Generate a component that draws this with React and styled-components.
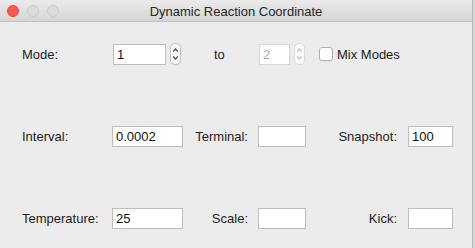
import styled, { createGlobalStyle } from "styled-components";

const GlobalStyle = createGlobalStyle`
  html, body {
    margin: 0;
    padding: 0;
    background: #d6d6d6;
  }
  body {
    font-family: "Liberation Sans", Arial, sans-serif;
    font-size: 13px;
    color: #1c1c1c;
  }
`;

const Window = styled.div`
  width: 473px;
  height: 248px;
  background: #ececec;
  border-right: 1px solid #b8b8b8;
  box-sizing: border-box;
  display: flex;
  flex-direction: column;
`;

const TitleBar = styled.div`
  height: 22px;
  box-sizing: border-box;
  position: relative;
  display: flex;
  align-items: center;
  justify-content: center;
  background: linear-gradient(180deg, #ebebeb 0%, #d5d5d5 100%);
  border-bottom: 1px solid #c2c2c2;
`;

const Lights = styled.div`
  position: absolute;
  left: 7px;
  top: 5px;
  display: flex;
  gap: 8px;
`;

const Light = styled.span`
  width: 12px;
  height: 12px;
  box-sizing: border-box;
  border-radius: 50%;
  background: ${(p) => (p.$red ? "#fc5753" : "#dcdcdc")};
  border: 1px solid ${(p) => (p.$red ? "#df4744" : "#cacaca")};
`;

const Title = styled.div`
  font-size: 13px;
  color: #262626;
  padding-top: 1px;
`;

const Form = styled.div`
  display: grid;
  grid-template-columns: 90px 71px 75px 48px 102px 45px;
  grid-template-rows: 22px 21px 21px;
  row-gap: 61px;
  padding: 21px 0 0 22px;
  align-items: center;
`;

const Label = styled.div`
  text-align: ${(p) => (p.$right ? "right" : "left")};
  padding-right: ${(p) => (p.$pr ? p.$pr : 0)}px;
  padding-left: ${(p) => (p.$pl ? p.$pl : 0)}px;
  white-space: nowrap;
`;

const Field = styled.div`
  height: 21px;
  width: ${(p) => p.$w || 71}px;
  box-sizing: border-box;
  background: #fff;
  border: 1px solid #bdbdbd;
  border-top-color: #b2b2b2;
  padding: 0 3px;
  display: flex;
  align-items: center;
  color: ${(p) => (p.$disabled ? "#a8a8a8" : "#111")};
  border-color: ${(p) => (p.$disabled ? "#d6d6d6" : "#bdbdbd")};
`;

const SpinRow = styled.div`
  display: flex;
  align-items: center;
  gap: 4px;
  margin-left: ${(p) => p.$ml || 0}px;
`;

const Spinner = styled.div`
  width: 11px;
  height: 22px;
  box-sizing: border-box;
  border: 1px solid ${(p) => (p.$disabled ? "#dadada" : "#c2c2c2")};
  border-radius: 5px;
  background: #fbfbfb;
  display: flex;
  align-items: center;
  justify-content: center;
  box-shadow: ${(p) => (p.$disabled ? "none" : "0 1px 0 rgba(0,0,0,0.06)")};
`;

const CheckWrap = styled.label`
  grid-column: 5 / 7;
  display: flex;
  align-items: center;
  gap: 4px;
  margin-left: 13px;
`;

const Box = styled.span`
  width: 14px;
  height: 14px;
  box-sizing: border-box;
  border: 1px solid #b0b0b0;
  border-radius: 3px;
  background: #fff;
  box-shadow: 0 1px 0 rgba(0,0,0,0.05);
`;

function Stepper({ disabled }) {
  const c = disabled ? "#c4c4c4" : "#4a4a4a";
  return (
    <Spinner $disabled={disabled}>
      <svg width="7" height="16" viewBox="0 0 7 16">
        <path d="M1.2 5.5 L3.5 3 L5.8 5.5" fill="none" stroke={c} strokeWidth="1.2" />
        <path d="M1.2 10.5 L3.5 13 L5.8 10.5" fill="none" stroke={c} strokeWidth="1.2" />
      </svg>
    </Spinner>
  );
}

export default function App() {
  return (
    <>
      <GlobalStyle />
      <Window>
        <TitleBar>
          <Lights>
            <Light $red />
            <Light />
            <Light />
          </Lights>
          <Title>Dynamic Reaction Coordinate</Title>
        </TitleBar>
        <Form>
          <Label>Mode:</Label>
          <SpinRow $ml={1}>
            <Field $w={53}>1</Field>
            <Stepper />
          </SpinRow>
          <Label $pl={31}>to</Label>
          <SpinRow $ml={1}>
            <Field $w={31} $disabled>2</Field>
            <Stepper disabled />
          </SpinRow>
          <CheckWrap>
            <Box />
            Mix Modes
          </CheckWrap>

          <Label>Interval:</Label>
          <Field>0.0002</Field>
          <Label $right $pr={10}>Terminal:</Label>
          <Field $w={48} />
          <Label $right $pr={11}>Snapshot:</Label>
          <Field $w={45}>100</Field>

          <Label>Temperature:</Label>
          <Field>25</Field>
          <Label $right $pr={10}>Scale:</Label>
          <Field $w={48} />
          <Label $right $pr={11}>Kick:</Label>
          <Field $w={45} />
        </Form>
      </Window>
    </>
  );
}
